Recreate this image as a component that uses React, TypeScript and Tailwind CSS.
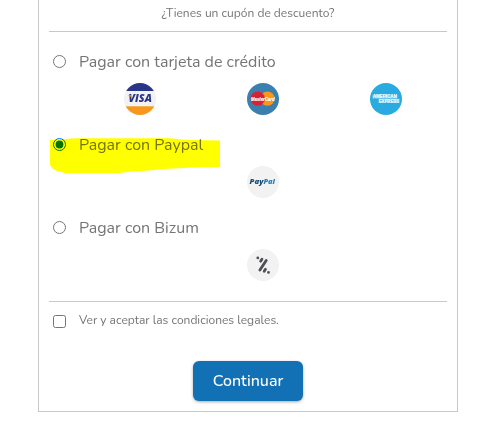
import { useState, type ReactNode } from 'react';

const font = "font-['Nunito','Open_Sans','Noto_Sans',sans-serif]";

function Visa() {
  return (
    <svg className="overflow-visible" width="32" height="32" viewBox="0 0 32 32">
      <clipPath id="visa"><circle cx="16" cy="16" r="16" /></clipPath>
      <g clipPath="url(#visa)">
        <rect width="32" height="32" fill="#f2f2f2" />
        <rect width="32" height="8" fill="#293688" />
        <rect y="23.3" width="32" height="9" fill="#f7981d" />
      </g>
      <text x="4.5" y="19.4" textLength="23.4" lengthAdjust="spacingAndGlyphs" fontFamily="Open Sans" fontWeight="800" fontStyle="italic" fontSize="9.8" fill="#293688">VISA</text>
      <path d="M3.8 12.2h3.2l1 2.6C7 13.8 5.7 12.9 3.8 12.5z" fill="#f7981d" />
    </svg>
  );
}

function MasterCard() {
  return (
    <svg className="overflow-visible" width="32" height="32" viewBox="0 0 32 32">
      <circle cx="16" cy="16" r="16" fill="#3b7fae" />
      <circle cx="20.4" cy="15.6" r="7.2" fill="#f7981d" />
      <circle cx="10.8" cy="15.6" r="7.2" fill="#d92231" />
      <path d="M15.6 10.3a7.2 7.2 0 0 1 0 10.6" stroke="#e8752b" strokeWidth=".7" fill="none" />
      <text x="4" y="17.8" textLength="23.5" lengthAdjust="spacingAndGlyphs" fontFamily="Liberation Sans" fontWeight="700" fontStyle="italic" fontSize="5.8" fill="#fff" stroke="#fff" strokeWidth=".2">MasterCard</text>
    </svg>
  );
}

function Amex() {
  return (
    <svg className="overflow-visible" width="32" height="32" viewBox="0 0 32 32">
      <circle cx="16" cy="16" r="16" fill="#29abe2" />
      <path d="M2.4 11.5h25.2v4.3h2.2v4.3H8.4v-4.3h-6z" fill="#fff" opacity=".3" />
      <g fontFamily="Liberation Sans" fontWeight="700" fontSize="4.6" fill="#e9f7fd" stroke="#e9f7fd" strokeWidth=".2">
        <text x="2.9" y="15.3" textLength="24.2" lengthAdjust="spacingAndGlyphs">AMERICAN</text>
        <text x="9" y="19.8" textLength="20.2" lengthAdjust="spacingAndGlyphs">EXPRESS</text>
      </g>
    </svg>
  );
}

function PayPal() {
  return (
    <svg className="overflow-visible" width="32" height="32" viewBox="0 0 32 32">
      <circle cx="16" cy="16" r="16" fill="#f2f2f2" />
      <g fontFamily="Open Sans" fontWeight="800" fontStyle="italic" fontSize="7.5">
        <text x="2.6" y="17.6" textLength="13.8" lengthAdjust="spacingAndGlyphs" fill="#1b4a75">Pay</text>
        <text x="16.4" y="17.6" textLength="11.6" lengthAdjust="spacingAndGlyphs" fill="#2383b4">Pal</text>
      </g>
    </svg>
  );
}

function Bizum() {
  return (
    <svg className="overflow-visible" width="32" height="32" viewBox="0 0 32 32">
      <circle cx="16" cy="16" r="16" fill="#f2f2f2" />
      <g stroke="#505054" strokeWidth="2.8" strokeLinecap="round">
        <path d="M19.2 11.4 12.9 21M14.9 10.2l-1.3 2M18.5 20.3l-1.3 2" />
        <path d="M10.8 8.9h.01M21.5 23.4h.01" />
      </g>
    </svg>
  );
}

type Option = { id: string; label: string; icons: ReactNode[] };

const options: Option[] = [
  { id: 'card', label: 'Pagar con tarjeta de crédito', icons: [<Visa key="v" />, <MasterCard key="m" />, <Amex key="a" />] },
  { id: 'paypal', label: 'Pagar con Paypal', icons: [<PayPal key="p" />] },
  { id: 'bizum', label: 'Pagar con Bizum', icons: [<Bizum key="b" />] },
];

export default function App() {
  const [selected, setSelected] = useState('paypal');
  return (
    <main className={`h-[447px] w-[495px] overflow-hidden bg-white pl-[38px] text-[#757575] ${font}`}>
      <section className="h-[412px] w-[420px] border border-t-0 border-[#c8c8c8] px-2.5">
        <div className="flex h-8 justify-center border-b border-[#c8c8c8] pt-1">
          <span className="h-[18px] text-[12px] leading-[18px] whitespace-nowrap">¿Tienes un cupón de descuento?</span>
        </div>
        <div className="flex h-[270px] flex-col gap-[18px] border-b border-[#c8c8c8] pt-[18px]">
          {options.map((option) => (
            <div key={option.id} className="relative h-[65px] shrink-0">
              <label className="flex h-6 items-start pl-1">
                <input type="radio" name="payment" checked={selected === option.id} onChange={() => setSelected(option.id)} className="mt-[5px] mr-[13px] h-[13px] w-[13px]" />
                <span className="text-[16px] leading-6 font-normal whitespace-nowrap">{option.label}</span>
              </label>
              <div className="mt-[9px] flex justify-center gap-[91px] pl-[30px]">{option.icons}</div>
              {option.id === 'paypal' && (
                <svg className="pointer-events-none absolute top-[5px] left-[1px] mix-blend-multiply" width="170" height="37" viewBox="0 0 170 37">
                  <path d="M0 2 26 .3h95l12 1.5 37 .7v26.5h-19l-17 1-20 1-18 1.8-14 .7-13 1.5H15l-8-2-4-2-3-4z" fill="#ff0" />
                </svg>
              )}
            </div>
          ))}
        </div>
        <label className="flex h-[59px] items-start pt-[9px] pl-1">
          <input type="checkbox" className="mt-1 mr-[13px] h-[13px] w-[13px]" />
          <span className="text-[12px] leading-[18px] whitespace-nowrap">Ver y aceptar las condiciones legales.</span>
        </label>
        <div className="flex justify-center">
          <button className="flex h-10 w-[110px] items-center justify-center rounded-md bg-[#1270b5] text-[16px] font-medium text-white shadow-[0_1px_3px_rgba(0,0,0,0.35)]">Continuar</button>
        </div>
      </section>
    </main>
  );
}
